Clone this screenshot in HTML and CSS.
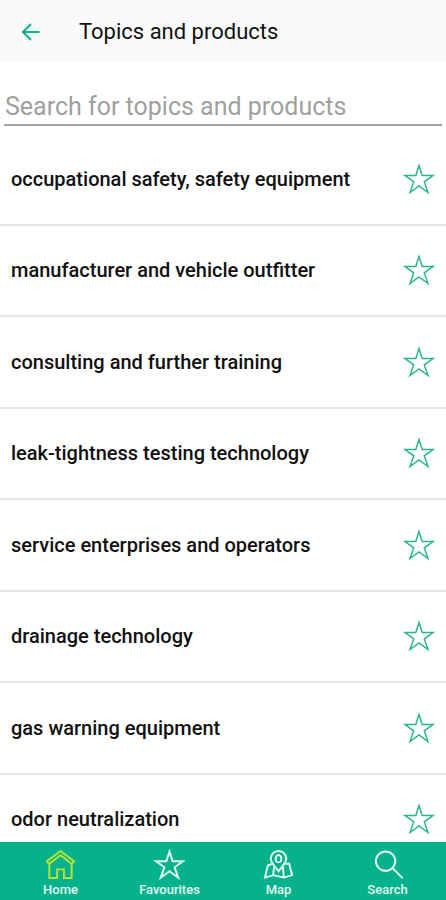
FILE: index.html
```html
<!DOCTYPE html>
<html lang="en">
<head>
<meta charset="utf-8">
<meta name="viewport" content="width=device-width, initial-scale=1">
<title>Topics and products</title>
<link rel="stylesheet" href="styles.css">
</head>
<body>
<svg class="defs" aria-hidden="true">
  <symbol id="star" viewBox="0 0 32 32"><path d="M16 2.500 19.200 12.600H30L21.300 18.900 25 29.500 16 22.900 7 29.500 10.700 18.900 2 12.600H12.800Z"/></symbol>
</svg>
<header class="bar">
  <button class="back" type="button" aria-label="Back">
    <svg viewBox="0 0 22 22"><path d="M19.500 11H4M11 3 3 11 11 19"/></svg>
  </button>
  <h1 class="title">Topics and products</h1>
</header>
<div class="search">
  <input class="search-input" type="search" aria-label="Search for topics and products" placeholder="Search for topics and products">
</div>
<main class="content">
  <ul class="topics">
    <li class="topic"><a href="#">occupational safety, safety equipment</a><button class="fav" type="button" aria-label="Add to favourites"><svg><use href="#star"/></svg></button></li>
    <li class="topic"><a href="#">manufacturer and vehicle outfitter</a><button class="fav" type="button" aria-label="Add to favourites"><svg><use href="#star"/></svg></button></li>
    <li class="topic"><a href="#">consulting and further training</a><button class="fav" type="button" aria-label="Add to favourites"><svg><use href="#star"/></svg></button></li>
    <li class="topic"><a href="#">leak-tightness testing technology</a><button class="fav" type="button" aria-label="Add to favourites"><svg><use href="#star"/></svg></button></li>
    <li class="topic"><a href="#">service enterprises and operators</a><button class="fav" type="button" aria-label="Add to favourites"><svg><use href="#star"/></svg></button></li>
    <li class="topic"><a href="#">drainage technology</a><button class="fav" type="button" aria-label="Add to favourites"><svg><use href="#star"/></svg></button></li>
    <li class="topic"><a href="#">gas warning equipment</a><button class="fav" type="button" aria-label="Add to favourites"><svg><use href="#star"/></svg></button></li>
    <li class="topic"><a href="#">odor neutralization</a><button class="fav" type="button" aria-label="Add to favourites"><svg><use href="#star"/></svg></button></li>
  </ul>
</main>
<nav class="tabs">
  <a class="tab active" href="#"><svg viewBox="0 0 32 32"><path d="M16 2 2 12.500 4 15.500 16 6.500 28 15.500 30 12.500ZM4.500 15.500V30H12.500V21H19.500V30H27.500V15.500"/></svg><span>Home</span></a>
  <a class="tab" href="#"><svg><use href="#star"/></svg><span>Favourites</span></a>
  <a class="tab" href="#"><svg viewBox="0 0 32 32"><path d="M16 23C12 17.500 8 14 8 10A8 8 0 0 1 24 10C24 14 20 17.500 16 23Z"/><ellipse cx="16" cy="10" rx="3" ry="3.800"/><path d="M9 15.500 5 17 2 29.500 10.500 27 21.500 29.500 30 27 27 15 23 15.500M10.500 27 11.500 18M21.500 29.500 20.500 18"/></svg><span>Map</span></a>
  <a class="tab" href="#"><svg viewBox="0 0 32 32"><circle cx="14" cy="12.500" r="10"/><path d="M21 19.500 31.500 30"/></svg><span>Search</span></a>
</nav>
</body>
</html>
```
FILE: styles.css
```css
* { box-sizing: border-box; }

body {
  margin: 0;
  height: 100vh;
  display: flex;
  flex-direction: column;
  background: #fff;
  color: #111;
  font-family: Roboto, "Liberation Sans", sans-serif;
}

a { color: inherit; text-decoration: none; }

button {
  padding: 0;
  border: 0;
  background: none;
  cursor: pointer;
}

svg {
  display: block;
  fill: none;
  stroke: currentColor;
}

.defs { position: absolute; width: 0; height: 0; }

.bar {
  display: flex;
  align-items: center;
  gap: 37px;
  height: 62px;
  padding: 2px 20px 0;
  background: #fafafa;
}

.back { color: #10b183; }
.back svg { width: 22px; height: 22px; stroke-width: 2; }

.title {
  margin: 0;
  font-size: 22px;
  line-height: 28px;
  font-weight: 400;
}

.search { padding: 24px 4px 8px; }

.search-input {
  display: block;
  width: 100%;
  height: 40px;
  padding: 2px 1px 0;
  border: 0;
  border-bottom: 2px solid #a3a3a3;
  border-radius: 0;
  outline: 0;
  background: none;
  color: #111;
  font: 400 25px/32px Roboto, "Liberation Sans", sans-serif;
  appearance: none;
}
.search-input::placeholder { color: #a0a0a0; opacity: 1; }

.content {
  flex: 1;
  min-height: 0;
  overflow: hidden;
}

.topics {
  display: grid;
  grid-auto-rows: 1fr;
  height: calc(100% + 24px);
  margin: 0;
  padding: 0;
  list-style: none;
}

.topic {
  display: flex;
  align-items: center;
  justify-content: space-between;
  padding: 0 11px;
  border-bottom: 2px solid #e6e6e6;
  font-size: 20px;
  line-height: 24px;
  font-weight: 500;
}

.fav { color: #2bb58d; }
.fav svg { width: 32px; height: 32px; stroke-width: 1.5; }

.tabs {
  display: flex;
  height: 58px;
  padding: 0 4px 0 6px;
  background: #05b28c;
}

.tab {
  flex: 1;
  display: flex;
  flex-direction: column;
  align-items: center;
  gap: 2px;
  padding-top: 7px;
  color: #e2f8f1;
  font-size: 13px;
  line-height: 16px;
  font-weight: 500;
}
.tab svg { width: 31px; height: 31px; stroke-width: 2; }
.active svg { color: #b5e332; }
```
